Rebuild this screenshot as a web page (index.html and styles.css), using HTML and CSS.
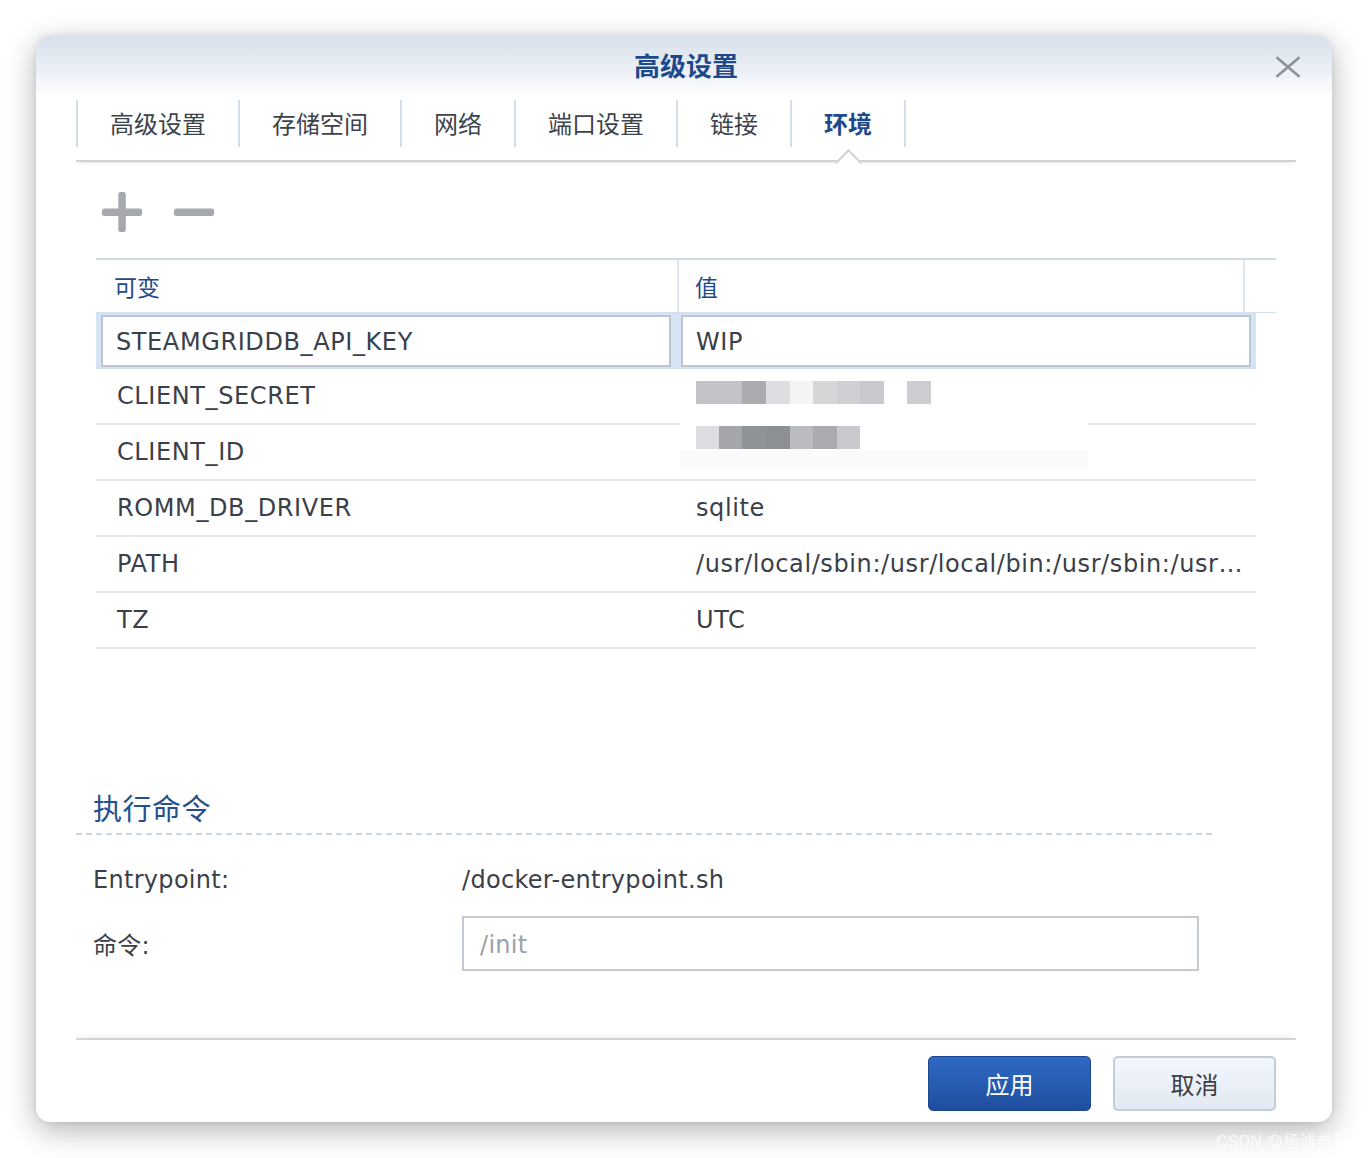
FILE: index.html
```html
<!DOCTYPE html>
<html lang="zh-CN">
<head>
<meta charset="utf-8">
<title>高级设置</title>
<link rel="stylesheet" href="styles.css">
</head>
<body>
<div class="page">
  <div class="dialog">
    <header class="dlg-header">
      <span class="spacer"></span>
      <h1 class="dlg-title">高级设置</h1>
      <button class="close" aria-label="close">
        <svg width="26" height="22" viewBox="0 0 26 22"><path d="M1.5 1.2 L24.5 20.8 M24.5 1.2 L1.5 20.8" stroke="#8d9197" stroke-width="2.6" fill="none"/></svg>
      </button>
    </header>

    <div class="dlg-body">
      <nav class="tabs">
        <div class="tab">高级设置</div>
        <div class="tab">存储空间</div>
        <div class="tab">网络</div>
        <div class="tab">端口设置</div>
        <div class="tab">链接</div>
        <div class="tab active">环境</div>
      </nav>

      <div class="toolbar">
        <button class="icon-btn" aria-label="add">
          <svg width="40" height="40" viewBox="0 0 40 40"><rect x="0" y="16.5" width="40" height="7.5" rx="2.5" fill="#a5a8ad"/><rect x="16.3" y="0" width="7.5" height="40" rx="2.5" fill="#a5a8ad"/></svg>
        </button>
        <button class="icon-btn" aria-label="remove">
          <svg width="40" height="40" viewBox="0 0 40 40"><rect x="0" y="16.5" width="40" height="7.5" rx="2.5" fill="#a5a8ad"/></svg>
        </button>
      </div>

      <div class="grid">
        <div class="grid-head">
          <div class="gh-cell c1">可变</div>
          <div class="gh-cell c2">值</div>
          <div class="gh-cell c3"></div>
        </div>
        <div class="grid-body">
          <div class="row selected">
            <div class="cell c1"><div class="edit">STEAMGRIDDB_API_KEY</div></div>
            <div class="cell c2"><div class="edit">WIP</div></div>
          </div>
          <div class="row">
            <div class="cell c1">CLIENT_SECRET</div>
            <div class="cell c2"></div>
          </div>
          <div class="row">
            <div class="cell c1">CLIENT_ID</div>
            <div class="cell c2"></div>
          </div>
          <div class="row">
            <div class="cell c1">ROMM_DB_DRIVER</div>
            <div class="cell c2">sqlite</div>
          </div>
          <div class="row">
            <div class="cell c1">PATH</div>
            <div class="cell c2">/usr/local/sbin:/usr/local/bin:/usr/sbin:/usr…</div>
          </div>
          <div class="row">
            <div class="cell c1">TZ</div>
            <div class="cell c2">UTC</div>
          </div>

          <div class="redact">
            <div class="redact-row r1"></div>
            <div class="redact-row r2"></div>
            <div class="redact-fade"></div>
          </div>
        </div>
      </div>

      <section class="exec">
        <h2 class="section-title">执行命令</h2>
        <div class="form">
          <div class="label">Entrypoint:</div>
          <div class="value">/docker-entrypoint.sh</div>
          <div class="label">命令:</div>
          <div class="input placeholder">/init</div>
        </div>
      </section>
    </div>

    <footer class="footer">
      <button class="btn primary">应用</button>
      <button class="btn">取消</button>
    </footer>
  </div>
  <div class="watermark">CSDN @杨浦老苏</div>
</div>
</body>
</html>
```

FILE: styles.css
```css
* { box-sizing: border-box; }

html, body {
  margin: 0;
  padding: 0;
  background: #ffffff;
}

body {
  font-family: "DejaVu Sans", "Noto Sans CJK SC", sans-serif;
  color: #3a4049;
}

.page {
  position: relative;
  padding: 36px;
  width: 1368px;
  height: 1158px;
}

.dialog {
  width: 1296px;
  height: 1086px;
  background: #ffffff;
  border-radius: 14px;
  box-shadow: 0 8px 30px rgba(0, 0, 0, 0.30), 0 0 6px rgba(0, 0, 0, 0.08);
  display: flex;
  flex-direction: column;
  overflow: hidden;
}

/* header */
.dlg-header {
  height: 62px;
  flex: none;
  display: grid;
  grid-template-columns: 1fr auto 1fr;
  align-items: center;
  background: linear-gradient(to bottom, #d8e0eb 0%, #eef2f7 60%, #ffffff 100%);
}

.dlg-title {
  margin: -4px 0 0 4px;
  padding: 0;
  font-family: "Noto Sans CJK SC", sans-serif;
  font-size: 26px;
  font-weight: 700;
  color: #1e4a8b;
  line-height: 34px;
}

.close {
  justify-self: end;
  margin-right: 31px;
  padding: 0;
  border: 0;
  background: transparent;
  width: 26px;
  height: 22px;
  display: flex;
}

/* body */
.dlg-body {
  flex: 1;
  padding: 0 36px 0 40px;
  display: flex;
  flex-direction: column;
}

.tabs {
  margin-top: 2px;
  display: flex;
  padding-bottom: 13px;
  border-bottom: 2px solid #d2d2d2;
  box-shadow: 0 3px 3px -2px rgba(0, 0, 0, 0.10);
  position: relative;
}

.tab {
  position: relative;
  height: 47px;
  padding: 0 32px 2px 32px;
  border-left: 2px solid #d3dce8;
  display: flex;
  align-items: center;
  font-family: "Noto Sans CJK SC", sans-serif;
  font-size: 24px;
  color: #3d434b;
  line-height: 1;
}

.tab:last-child {
  border-right: 2px solid #d3dce8;
}

.tab.active {
  color: #1e4a8b;
  font-weight: 700;
}

.tab.active::after {
  content: "";
  position: absolute;
  left: calc(50% - 9px);
  top: 53px;
  width: 17px;
  height: 17px;
  background: #ffffff;
  border-top: 2px solid #d2d2d2;
  border-left: 2px solid #d2d2d2;
  transform: rotate(45deg);
}

/* toolbar */
.toolbar {
  margin-top: 30px;
  padding-left: 26px;
  display: flex;
  gap: 32px;
  height: 40px;
}

.icon-btn {
  width: 40px;
  height: 40px;
  padding: 0;
  border: 0;
  background: transparent;
  display: flex;
}

/* grid */
.grid {
  margin: 26px 20px 0 20px;
  height: 502px;
  flex: none;
}

.grid-head {
  height: 55px;
  display: grid;
  grid-template-columns: 581px 566px 1fr;
  border-top: 2px solid #cfdbe9;
  border-bottom: 1px solid #d6e0ec;
}

.gh-cell {
  display: flex;
  align-items: center;
  font-family: "Noto Sans CJK SC", sans-serif;
  font-size: 23px;
  color: #21498a;
  padding-left: 18px;
}

.gh-cell.c2,
.gh-cell.c3 {
  border-left: 2px solid #dde5ef;
}

.gh-cell.c2 {
  padding-left: 16px;
}

.grid-body {
  position: relative;
  width: 1160px;
}

.row {
  height: 56px;
  display: grid;
  grid-template-columns: 581px 579px;
  border-bottom: 2px solid #e5e9ee;
  font-size: 24px;
  letter-spacing: 0.6px;
  color: #3a4049;
}

.cell {
  display: flex;
  align-items: center;
  white-space: nowrap;
  overflow: hidden;
}

.row .cell.c1 { padding-left: 21px; }
.row .cell.c2 { padding-left: 19px; }

.row.selected {
  background: #d6e3f4;
  border-bottom: 0;
  padding: 2px 0;
}

.row.selected .cell.c1 { padding: 0 6px 0 5px; }
.row.selected .cell.c2 { padding: 0 5px 0 4px; }

.edit {
  width: 100%;
  height: 52px;
  background: #ffffff;
  border: 2px solid #bcc5d1;
  display: flex;
  align-items: center;
  padding-left: 13px;
  padding-top: 1px;
}

/* redaction patch */
.redact {
  position: absolute;
  left: 584px;
  top: 57px;
  width: 408px;
  height: 97px;
  background: #ffffff;
  padding: 11px 0 0 16px;
  display: flex;
  flex-direction: column;
}

.redact-row {
  height: 23px;
}

.redact-row.r1 {
  width: 235px;
  background: linear-gradient(to right,
    #c3c3c7 0 46px,
    #aaacaf 46px 70px,
    #dddee1 70px 94px,
    #f4f4f6 94px 117px,
    #d5d6d8 117px 141px,
    #ced0d3 141px 164px,
    #c7c9cc 164px 188px,
    transparent 188px 211px,
    #cccdd0 211px 235px);
}

.redact-row.r2 {
  margin-top: 22px;
  width: 164px;
  background: linear-gradient(to right,
    #dddee1 0 23px,
    #a4a6a9 23px 46px,
    #8f9296 46px 70px,
    #8c8f94 70px 94px,
    #babcbf 94px 117px,
    #a9abb1 117px 141px,
    #c7c9cc 141px 164px);
}

.redact-fade {
  margin: auto 0 0 -16px;
  height: 17px;
  background: #f9fafb;
}

/* exec section */
.exec {
  flex: none;
}

.section-title {
  margin: 27px 80px 0 0;
  padding: 0 0 8px 17px;
  font-family: "Noto Sans CJK SC", sans-serif;
  font-weight: 400;
  font-size: 29px;
  letter-spacing: 0.5px;
  line-height: 40px;
  color: #24508f;
  background-image: linear-gradient(to right, #c9d4e3 0 6px, transparent 6px 10px);
  background-size: 10px 2px;
  background-repeat: repeat-x;
  background-position: left bottom;
}

.form {
  padding: 21px 0 0 17px;
  display: grid;
  grid-template-columns: 369px 737px;
  grid-template-rows: 48px 55px;
  row-gap: 12px;
  font-size: 24px;
  letter-spacing: 0.3px;
  color: #3a4049;
}

.label,
.value {
  display: flex;
  align-items: center;
}

.input {
  border: 2px solid #c3cad5;
  background: #ffffff;
  display: flex;
  align-items: center;
  padding-left: 16px;
  padding-top: 2px;
}

.input.placeholder {
  color: #9aa1aa;
}

/* footer */
.footer {
  flex: none;
  margin: 0 36px 0 40px;
  height: 84px;
  border-top: 2px solid #d5d5d5;
  box-shadow: 0 -4px 5px -3px rgba(0, 0, 0, 0.07);
  padding: 16px 20px 11px 0;
  display: flex;
  justify-content: flex-end;
  gap: 22px;
}

.btn {
  width: 163px;
  height: 55px;
  border-radius: 5px;
  border: 2px solid #c3ccd9;
  background: linear-gradient(to bottom, #f3f7fd, #e3e9f2);
  font-family: "Noto Sans CJK SC", sans-serif;
  font-size: 24px;
  color: #3b4048;
  padding: 0;
  display: flex;
  align-items: center;
  justify-content: center;
}

.btn.primary {
  border: 1px solid #1c478f;
  background: linear-gradient(to bottom, #306ac3, #1f4e9f);
  color: #ffffff;
}

/* watermark */
.watermark {
  position: absolute;
  right: 20px;
  top: 1128px;
  font-family: "Liberation Sans", "Noto Sans CJK SC", sans-serif;
  font-size: 16px;
  color: rgba(255, 255, 255, 0.8);
  letter-spacing: 0.2px;
}
```
